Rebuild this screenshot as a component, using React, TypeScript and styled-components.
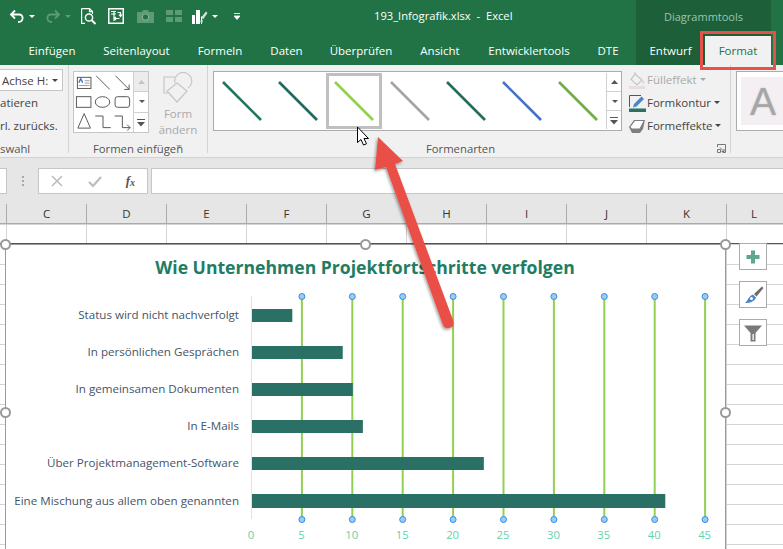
import React from 'react';
import styled, {createGlobalStyle} from 'styled-components';

const FONT = `"Open Sans", "Noto Sans", sans-serif`;

const GlobalStyle = createGlobalStyle`
html, body {
  margin: 0;
  padding: 0;
  background: #fff;
}
`;

const TABS = [
    {label: 'Einfügen', width: 75},
    {label: 'Seitenlayout', width: 94},
    {label: 'Formeln', width: 73},
    {label: 'Daten', width: 60},
    {label: 'Überprüfen', width: 89},
    {label: 'Ansicht', width: 69},
    {label: 'Entwicklertools', width: 109},
    {label: 'DTE', width: 49},
];

const COLUMNS = ['C', 'D', 'E', 'F', 'G', 'H', 'I', 'J', 'K'];

const LINE_STYLES = ['#1f7660', '#24695e', '#92d050', '#a5a5a5', '#2a6b60', '#4472c4', '#70ad47'];

const CATEGORIES = [
    {label: 'Status wird nicht nachverfolgt', value: 4, y: 309, h: 13, textY: 319},
    {label: 'In persönlichen Gesprächen', value: 9, y: 346, h: 13, textY: 356},
    {label: 'In gemeinsamen Dokumenten', value: 10, y: 383, h: 13, textY: 393},
    {label: 'In E-Mails', value: 11, y: 420, h: 13, textY: 430},
    {label: 'Über Projektmanagement-Software', value: 23, y: 457, h: 13, textY: 467},
    {label: 'Eine Mischung aus allem oben genannten', value: 41, y: 494, h: 14, textY: 505},
];

const TICKS = [5, 10, 15, 20, 25, 30, 35, 40, 45];
const SCALE = 10.08;
const HANDLES = [[5.5, 244.5], [365.5, 244.5], [725.5, 244.5], [5.5, 412.5], [725.5, 412.5]];

export default function App() {
    return (
        <Page>
            <GlobalStyle/>
            <TitleBar>
                <QuickAccess>
                    <QatSlot $gap={0}><UndoIcon/></QatSlot>
                    <SmallCaret/>
                    <QatSlot $gap={10}><RedoIcon/></QatSlot>
                    <SmallCaret $dim/>
                    <QatSlot $gap={10}><PreviewIcon/></QatSlot>
                    <QatSlot $gap={11}><PivotIcon/></QatSlot>
                    <QatSlot $gap={13}><CameraIcon/></QatSlot>
                    <QatSlot $gap={12}><GridIcon/></QatSlot>
                    <QatSlot $gap={10}><BrushIcon/></QatSlot>
                    <SmallCaret/>
                    <QatSlot $gap={16}><MoreIcon/></QatSlot>
                </QuickAccess>
                <DocTitle>193_Infografik.xlsx&nbsp; -&nbsp; Excel</DocTitle>
                <ContextTitle>Diagrammtools</ContextTitle>
            </TitleBar>
            <TabBar>
                <TabList>
                    {TABS.map(t => <Tab key={t.label} $width={t.width}>{t.label}</Tab>)}
                </TabList>
                <ContextTabs>
                    <Tab $width={69}>Entwurf</Tab>
                    <ActiveTab>Format</ActiveTab>
                </ContextTabs>
            </TabBar>
            <Ribbon>
                <LeftGroup>
                    <ElementSelect>Achse H:<Caret/></ElementSelect>
                    <ClippedRow>atieren</ClippedRow>
                    <ClippedRow>rl. zurücks.</ClippedRow>
                    <GroupLabel $right={40} $align="right">swahl</GroupLabel>
                </LeftGroup>
                <ShapesGroup>
                    <ShapesBody>
                        <ShapeGallery>
                            <ShapesDrawing/>
                            <GalleryScroll $width={14}>
                                <ScrollCell $disabled><ScrollUp/></ScrollCell>
                                <ScrollCell><Caret/></ScrollCell>
                                <ScrollCell><ScrollMore/></ScrollCell>
                            </GalleryScroll>
                        </ShapeGallery>
                        <ChangeShape>
                            <ChangeShapeIcon/>
                            <ChangeLabel>Form<br/>ändern <Caret/></ChangeLabel>
                        </ChangeShape>
                    </ShapesBody>
                    <GroupLabel>Formen einfügen</GroupLabel>
                </ShapesGroup>
                <StylesGroup>
                    <StylesBody>
                        <StyleGallery>
                            {LINE_STYLES.map((color, i) => (
                                <StyleItem key={color} $selected={i === 2}>
                                    <svg width="50" height="50" viewBox="0 0 50 50">
                                        <line x1="6" y1="6" x2="44" y2="44" stroke={color} strokeWidth="2.6"/>
                                    </svg>
                                </StyleItem>
                            ))}
                            <GalleryScroll $width={14}>
                                <ScrollCell><ScrollUp/></ScrollCell>
                                <ScrollCell><Caret/></ScrollCell>
                                <ScrollCell><ScrollMore/></ScrollCell>
                            </GalleryScroll>
                        </StyleGallery>
                        <StyleCommands>
                            <StyleCommand $disabled><FillIcon/>Fülleffekt<Caret/></StyleCommand>
                            <StyleCommand><OutlineIcon/>Formkontur<Caret/></StyleCommand>
                            <StyleCommand><EffectIcon/>Formeffekte<Caret/></StyleCommand>
                        </StyleCommands>
                    </StylesBody>
                    <GroupLabel $right={17}>Formenarten</GroupLabel>
                    <DialogLauncher width="9" height="9" viewBox="0 0 9 9">
                        <path d="M.5 3V.5H8.5V8.5H5.5M3 3.5L7 7.5M4.5 7.5H7V5M.5 5.5H3.5V8.5H.5Z" fill="none" stroke="#777"/>
                    </DialogLauncher>
                </StylesGroup>
                <WordArtGroup>
                    <WordArtBox>
                        <WordArtSwatch>A</WordArtSwatch>
                    </WordArtBox>
                </WordArtGroup>
            </Ribbon>
            <FormulaBar>
                <NameBox/>
                <BarGrip>
                    <GripDot/>
                    <GripDot/>
                    <GripDot/>
                </BarGrip>
                <FormulaButtons>
                    <svg width="14" height="14" viewBox="0 0 14 14"><path d="M2 2L12 12M12 2L2 12" stroke="#bdbdbd" strokeWidth="1.6"/></svg>
                    <svg width="16" height="14" viewBox="0 0 16 14"><path d="M2 8L6 12L14 3" fill="none" stroke="#bdbdbd" strokeWidth="2.2"/></svg>
                    <FxLabel>f<sub>x</sub></FxLabel>
                </FormulaButtons>
                <FormulaInput/>
            </FormulaBar>
            <HeaderGap/>
            <ColumnHeaders>
                <ColumnHead $width={7}/>
                {COLUMNS.map(c => <ColumnHead key={c} $width={80}>{c}</ColumnHead>)}
                <LastColumnHead>L</LastColumnHead>
            </ColumnHeaders>
            <Sheet>
                <SelectionLine/>
                <ChartObject>
                    <ChartDrawing/>
                </ChartObject>
                <ChartButtons>
                    <ChartButton>
                        <svg width="16" height="16" viewBox="0 0 16 16"><path d="M6 1.5H10V6H14.5V10H10V14.5H6V10H1.5V6H6Z" fill="#5fa88e"/></svg>
                    </ChartButton>
                    <ChartButton>
                        <svg width="24" height="24" viewBox="0 0 24 24">
                            <path d="M13 11L21 3.5L22.5 5L15.5 13.5Z" fill="#6b6b6b"/>
                            <path d="M12 11.5L15 14.5C14 18 10 20 4 20C7 18 7.5 13 12 11.5Z" fill="#4a86c8"/>
                            <circle cx="10.5" cy="15.5" r="1.5" fill="#fff"/>
                        </svg>
                    </ChartButton>
                    <ChartButton>
                        <svg width="20" height="20" viewBox="0 0 20 20">
                            <path d="M1 2.5H19L12.5 10V18.5H7.5V10Z" fill="#7a7a7a"/>
                            <path d="M9.5 11V17H10.8V11Z" fill="#fff"/>
                        </svg>
                    </ChartButton>
                </ChartButtons>
            </Sheet>
            <FormatHighlight/>
            <ArrowOverlay viewBox="0 0 783 549" width="783" height="549">
                <defs>
                    <filter id="arrowShadow" x="-30%" y="-10%" width="160%" height="120%">
                        <feDropShadow dx="-1" dy="1.5" stdDeviation="1.8" floodColor="#000" floodOpacity="0.4"/>
                    </filter>
                </defs>
                <path d="M378 137L403 161L395 164L453 320Q455 327 449 328Q445 329 443 325L386 167L375 170Z" fill="#ea4f47" filter="url(#arrowShadow)"/>
                <path d="M357.5 127V142.5L361 139.5L363.5 145L366.5 143.8L364 138.5H368.5Z" fill="#fff" stroke="#000" strokeWidth="1"/>
            </ArrowOverlay>
        </Page>
    );
}

const ChartDrawing = () => (
    <ChartSvg viewBox="5 244 721 305" width="721" height="305">
        <rect x="5" y="244" width="721" height="305" fill="#fff"/>
        <path d="M5.5 549V244.5H725.5V549" fill="none" stroke="#9a9a9a" strokeWidth="1"/>
        <text x="365" y="274" textAnchor="middle" fontFamily={FONT} fontWeight="700" fontSize="17.6" fill="#217d62">
            Wie Unternehmen Projektfortschritte verfolgen
        </text>
        <line x1="251.5" y1="296" x2="251.5" y2="519" stroke="#d5e8e4" strokeWidth="1"/>
        {TICKS.map(t => {
            const x = 251.5 + t * SCALE;
            return <line key={t} x1={x} y1="297" x2={x} y2="519" stroke="#92d050" strokeWidth="2"/>;
        })}
        {CATEGORIES.map(c => (
            <React.Fragment key={c.label}>
                <rect x="252" y={c.y} width={c.value * SCALE} height={c.h} fill="#2a7064"/>
                <text x="239" y={c.textY} textAnchor="end" fontFamily={FONT} fontSize="11.6" fill="#44546a">{c.label}</text>
            </React.Fragment>
        ))}
        {TICKS.map(t => {
            const x = 251.5 + t * SCALE;
            return (
                <React.Fragment key={t}>
                    <circle cx={x} cy="296.5" r="3" fill="#9dc9f3" stroke="#2f8fe0"/>
                    <circle cx={x} cy="519.5" r="3" fill="#9dc9f3" stroke="#2f8fe0"/>
                </React.Fragment>
            );
        })}
        {[0, ...TICKS].map(t => (
            <text key={t} x={251 + t * SCALE} y="539" textAnchor="middle" fontFamily={FONT} fontSize="11.3" fill="#5fd3ad">{t}</text>
        ))}
        {HANDLES.map(([x, y]) => (
            <circle key={`${x}-${y}`} cx={x} cy={y} r="4.5" fill="#fff" stroke="#999" strokeWidth="2"/>
        ))}
    </ChartSvg>
);

const UndoIcon = () => (
    <svg width="16" height="16" viewBox="0 0 16 16"><path d="M6 2.5L2 6.5L6 10.5M2.5 6.5H10C15 6.5 15 14 9 14" fill="none" stroke="#fff" strokeWidth="1.8"/></svg>
);

const RedoIcon = () => (
    <svg width="16" height="16" viewBox="0 0 16 16"><path d="M10 2.5L14 6.5L10 10.5M13.5 6.5H6C1 6.5 1 14 7 14" fill="none" stroke="#5c9a78" strokeWidth="1.8"/></svg>
);

const PreviewIcon = () => (
    <svg width="16" height="17" viewBox="0 0 16 17">
        <path d="M.6.6H8.5L11.5 3.6V6M8.5.6V3.6H11.5M.6.6V15.4H4" fill="none" stroke="#fff" strokeWidth="1.2"/>
        <circle cx="8" cy="9.5" r="3.6" fill="none" stroke="#fff" strokeWidth="1.5"/>
        <path d="M10.5 12L14.5 16" stroke="#fff" strokeWidth="2"/>
    </svg>
);

const PivotIcon = () => (
    <svg width="16" height="16" viewBox="0 0 16 16">
        <rect x=".75" y=".75" width="14.5" height="14.5" fill="none" stroke="#fff" strokeWidth="1.5"/>
        <path d="M3 3.5H8M3 6H8M6 3V13M9.5 4.5H12.5V8M11 6.5L12.5 8.5L14 6.5M6.5 10.5H11.5M8 9L6.5 10.5L8 12" fill="none" stroke="#fff" strokeWidth="1.2"/>
    </svg>
);

const CameraIcon = () => (
    <svg width="17" height="13" viewBox="0 0 17 13">
        <path d="M0 2H5L6 0H11L12 2H17V13H0Z" fill="#5c9a78"/>
        <circle cx="8.5" cy="7" r="3.2" fill="#217346" stroke="#8ab89f"/>
    </svg>
);

const GridIcon = () => (
    <svg width="16" height="12" viewBox="0 0 16 12">
        <path d="M0 0H7V5H0ZM9 0H16V5H9ZM0 7H7V12H0ZM9 7H16V12H9Z" fill="#5c9a78"/>
    </svg>
);

const BrushIcon = () => (
    <svg width="16" height="15" viewBox="0 0 16 15">
        <path d="M0 6H3V15H0ZM4 1H8V15H4ZM9 8L10 7V15H9Z" fill="#fff"/>
        <path d="M9.5 8L14 2.5L15.5 4L11 10.5ZM8 12L11 11L10 14.5Z" fill="#cfe3d7"/>
    </svg>
);

const MoreIcon = () => (
    <svg width="6" height="7" viewBox="0 0 6 7">
        <path d="M0 .5H6M0 3H6L3 6.5Z" fill="#fff" stroke="#fff" strokeWidth=".8"/>
    </svg>
);

const ShapesDrawing = () => (
    <svg width="61" height="60" viewBox="0 0 61 60">
        <g fill="none" stroke="#555" strokeWidth="1">
            <rect x="3.5" y="4.5" width="14" height="11.5"/>
            <path d="M11 8H16M11 10.5H16M5 13H16" stroke="#999"/>
            <path d="M5 10L7 6L9 10" stroke="#4472c4" strokeWidth="1.4"/>
            <path d="M23 3L37 17"/>
            <path d="M43 3L57 17M52 17H57V12"/>
            <rect x="2.5" y="24.5" width="15" height="11"/>
            <ellipse cx="29.5" cy="30" rx="7.5" ry="5.5"/>
            <rect x="42.5" y="24.5" width="15" height="11" rx="2.5"/>
            <path d="M4 57L10.5 42L17 57Z"/>
            <path d="M22 44.5H30V56.5H38"/>
            <path d="M42 44.5H50V56.5H58M55 53.5L58 56.5L55 59.5"/>
        </g>
    </svg>
);

const ChangeShapeIcon = () => (
    <svg width="31" height="31" viewBox="0 0 31 31">
        <g fill="none" stroke="#c6c6c6" strokeWidth="1.2">
            <path d="M12 5H1V21H5"/>
            <path d="M12 11A8.5 8.5 0 1 1 25 16"/>
            <path d="M14 11L24 19L14 30L4 19Z"/>
        </g>
    </svg>
);

const ScrollUp = () => (
    <svg width="7" height="4" viewBox="0 0 7 4"><path d="M0 4L3.5 0L7 4Z" fill="currentColor"/></svg>
);

const ScrollMore = () => (
    <svg width="8" height="9" viewBox="0 0 8 9"><path d="M0 1H8V2H0ZM0 4H8L4 8.5Z" fill="currentColor"/></svg>
);

const FillIcon = () => (
    <svg width="18" height="18" viewBox="0 0 18 18">
        <path d="M7 1V4M7 3L14 9L9 14L3 8.5Z" fill="none" stroke="#c4c4c4" strokeWidth="1.2"/>
        <path d="M15 9C16.5 11 17 12 15.5 13C14 12 14 11 15 9Z" fill="#d5d5d5"/>
        <rect x="1" y="15" width="16" height="3" fill="#e6dede"/>
    </svg>
);

const OutlineIcon = () => (
    <svg width="18" height="18" viewBox="0 0 18 18">
        <path d="M1.5 13V1.5H13" fill="none" stroke="#555"/>
        <path d="M6 10L13.5 2.5L16 5L8.5 12.5L5 13.5Z" fill="#4a86c8"/>
        <rect x="1" y="14.5" width="17" height="3.5" fill="#2a7064"/>
    </svg>
);

const EffectIcon = () => (
    <svg width="18" height="16" viewBox="0 0 18 16">
        <path d="M1 9L6 2H17L15 11L12 15H4Z" fill="#7f7f7f"/>
        <path d="M2.5 9L7 3H15.5L11.5 10.5H4Z" fill="#fff"/>
    </svg>
);

const Page = styled.div`
position: relative;
width: 783px;
height: 549px;
overflow: hidden;
background: #fff;
font-family: ${FONT};
`;

const TitleBar = styled.header`
display: flex;
align-items: center;
height: 33px;
background: #217346;
color: #fff;
position: relative;
`;

const QuickAccess = styled.div`
display: flex;
align-items: center;
padding-left: 9px;
padding-bottom: 1px;
`;

type QatSlotProps = {
    $gap: number;
}

const QatSlot = styled.span<QatSlotProps>`
display: flex;
margin-left: ${props => props.$gap}px;
`;

type CaretProps = {
    $dim?: boolean;
}

const SmallCaret = styled.span<CaretProps>`
width: 0;
height: 0;
margin-left: 4px;
border-left: 3px solid transparent;
border-right: 3px solid transparent;
border-top: 3px solid ${props => props.$dim ? '#5c9a78' : '#fff'};
`;

const DocTitle = styled.div`
position: absolute;
left: 374px;
top: 8px;
font-size: 11.2px;
line-height: 16px;
white-space: nowrap;
`;

const ContextTitle = styled.div`
margin-left: auto;
margin-right: 12px;
width: 135px;
height: 100%;
background: #1c5f38;
color: #9fc3ae;
font-size: 11px;
display: flex;
align-items: center;
justify-content: center;
`;

const TabBar = styled.nav`
display: flex;
justify-content: space-between;
height: 32px;
background: #217346;
padding-right: 12px;
padding-left: 14.5px;
`;

const TabList = styled.div`
display: flex;
`;

const ContextTabs = styled.div`
display: flex;
width: 135px;
background: #1c5f38;
`;

type TabProps = {
    $width: number;
}

const Tab = styled.div<TabProps>`
width: ${props => props.$width}px;
color: #fff;
font-size: 11.5px;
display: flex;
align-items: center;
justify-content: center;
white-space: nowrap;
padding-top: 2px;
`;

const ActiveTab = styled.div`
flex: 1;
margin-top: 3px;
background: #f1f1f1;
color: #217346;
font-size: 11.5px;
display: flex;
align-items: center;
justify-content: center;
`;

const Ribbon = styled.section`
display: flex;
height: 93px;
background: #f1f1f1;
border-bottom: 1px solid #d2d2d2;
box-sizing: border-box;
color: #444;
font-size: 11.5px;
`;

const GroupBase = styled.div`
position: relative;
display: flex;
flex-direction: column;
box-sizing: border-box;
height: 88px;
border-right: 1px solid #d4d4d4;
`;

const LeftGroup = styled(GroupBase)`
width: 69px;
padding: 4px 0 0 0;
`;

const ShapesGroup = styled(GroupBase)`
width: 139px;
padding: 6px 0 0 4px;
`;

const StylesGroup = styled(GroupBase)`
width: 523px;
padding: 6px 0 0 5px;
`;

const WordArtGroup = styled.div`
flex: 1;
padding: 6px 0 0 5px;
`;

const ElementSelect = styled.div`
box-sizing: border-box;
width: 63px;
height: 22px;
background: #fff;
border: 1px solid #c6c6c6;
border-left: 0;
display: flex;
align-items: center;
justify-content: space-between;
padding: 0 4px 0 2px;
color: #444;
flex: none;
white-space: nowrap;
`;

const ClippedRow = styled.div`
height: 23px;
line-height: 23px;
white-space: nowrap;
`;

type GroupLabelProps = {
    $align?: string;
    $right?: number;
}

const GroupLabel = styled.div<GroupLabelProps>`
position: absolute;
bottom: -4px;
left: 0;
right: ${props => props.$right || 0}px;
text-align: ${props => props.$align || 'center'};
font-size: 11.3px;
line-height: 16px;
color: #555;
`;

const ShapesBody = styled.div`
display: flex;
gap: 6px;
`;

const ShapeGallery = styled.div`
display: flex;
width: 76px;
height: 62px;
background: #fff;
border: 1px solid #c6c6c6;
box-sizing: border-box;
`;

type GalleryScrollProps = {
    $width: number;
}

const GalleryScroll = styled.div<GalleryScrollProps>`
width: ${props => props.$width}px;
flex: none;
margin-left: auto;
display: flex;
flex-direction: column;
border-left: 1px solid #d0d0d0;
color: #555;
`;

type ScrollCellProps = {
    $disabled?: boolean;
}

const ScrollCell = styled.div<ScrollCellProps>`
flex: 1;
display: flex;
align-items: center;
justify-content: center;
background: ${props => props.$disabled ? '#ececec' : '#fff'};
color: ${props => props.$disabled ? '#c4c4c4' : '#555'};
& + & {
border-top: 1px solid #d0d0d0;
}
`;

const ChangeShape = styled.div`
width: 46px;
display: flex;
flex-direction: column;
align-items: center;
color: #a9a9a9;
padding-top: 1px;
text-align: center;
`;

const ChangeLabel = styled.div`
line-height: 16px;
margin-top: 3px;
`;

const Caret = styled.i`
display: inline-block;
width: 0;
height: 0;
border-left: 3px solid transparent;
border-right: 3px solid transparent;
border-top: 3px solid currentColor;
margin-left: 2px;
vertical-align: middle;
`;

const StylesBody = styled.div`
display: flex;
gap: 6px;
`;

const StyleGallery = styled.div`
display: flex;
width: 409px;
height: 60px;
background: #fff;
border: 1px solid #acacac;
box-sizing: border-box;
padding: 1px 0;
`;

type StyleItemProps = {
    $selected: boolean;
}

const StyleItem = styled.div<StyleItemProps>`
width: 56px;
flex: none;
box-sizing: border-box;
display: flex;
align-items: center;
justify-content: center;
border: ${props => props.$selected ? '3px solid #c0c0c0' : '0'};
`;

const StyleCommands = styled.div`
display: flex;
flex-direction: column;
gap: 2px;
margin-top: -2px;
`;

type StyleCommandProps = {
    $disabled?: boolean;
}

const StyleCommand = styled.div<StyleCommandProps>`
display: flex;
align-items: center;
gap: 1px;
height: 21px;
white-space: nowrap;
color: ${props => props.$disabled ? '#a9a9a9' : '#444'};
`;

const DialogLauncher = styled.svg`
position: absolute;
right: 4px;
bottom: 0;
`;

const WordArtBox = styled.div`
height: 60px;
background: #fff;
border: 1px solid #acacac;
border-right: 0;
box-sizing: border-box;
padding: 5px 0 5px 4px;
`;

const WordArtSwatch = styled.div`
height: 48px;
background: #f3eff3;
color: #a6a6a6;
font-family: "Liberation Sans", sans-serif;
font-size: 39px;
line-height: 49px;
padding-left: 9px;
text-shadow: 0 0 2px #c4c4c4;
`;

const FormulaBar = styled.div`
display: flex;
align-items: stretch;
height: 26px;
padding-top: 10px;
background: #e6e6e6;
`;

const NameBox = styled.div`
width: 7px;
background: #fff;
border: 1px solid #c6c6c6;
border-left: 0;
box-sizing: border-box;
`;

const BarGrip = styled.div`
width: 31px;
display: flex;
flex-direction: column;
align-items: flex-start;
justify-content: center;
gap: 2px;
padding-left: 15px;
box-sizing: border-box;
`;

const GripDot = styled.span`
width: 2px;
height: 2px;
background: #a8a8a8;
`;

const FormulaButtons = styled.div`
display: flex;
align-items: center;
justify-content: space-between;
box-sizing: border-box;
width: 110px;
padding: 0 12px 0 11px;
background: #fff;
border: 1px solid #c6c6c6;
`;

const FxLabel = styled.span`
font-family: "Liberation Serif", serif;
font-style: italic;
font-weight: 700;
font-size: 13px;
color: #555;
& sub {
font-size: 10px;
vertical-align: -1px;
}
`;

const FormulaInput = styled.div`
flex: 1;
margin-left: 3px;
background: #fff;
border: 1px solid #c6c6c6;
border-right: 0;
`;

const HeaderGap = styled.div`
height: 10px;
background: #e6e6e6;
`;

const ColumnHeaders = styled.div`
display: flex;
height: 20px;
background: #e6e6e6;
border-bottom: 1px solid #ababab;
box-sizing: border-box;
`;

type ColumnHeadProps = {
    $width: number;
}

const ColumnHead = styled.div<ColumnHeadProps>`
width: ${props => props.$width}px;
flex: none;
box-sizing: border-box;
border-right: 1px solid #ababab;
font-size: 11.5px;
line-height: 19px;
text-align: center;
color: #333;
`;

const LastColumnHead = styled.div`
flex: 1;
font-size: 11.5px;
line-height: 19px;
text-align: center;
color: #333;
padding-right: 2px;
`;

const Sheet = styled.main`
position: relative;
height: 325px;
background-color: #fff;
background-image:
  linear-gradient(to bottom, transparent 19px, #d4d4d4 19px),
  linear-gradient(to right, transparent 79px, #d4d4d4 79px);
background-size: 80px 20px, 80px 20px;
background-position: 0 1px, 7px 0;
`;

const SelectionLine = styled.div`
position: absolute;
left: 0;
right: 0;
top: 19px;
height: 1px;
background: #217346;
`;

const ChartObject = styled.div`
position: absolute;
left: 5px;
top: 20px;
`;

const ChartSvg = styled.svg`
display: block;
overflow: visible;
`;

const ChartButtons = styled.div`
position: absolute;
left: 739px;
top: 19px;
display: flex;
flex-direction: column;
gap: 11px;
`;

const ChartButton = styled.div`
width: 28px;
height: 27px;
box-sizing: border-box;
background: #fff;
border: 1px solid #ababab;
display: flex;
align-items: center;
justify-content: center;
`;

const FormatHighlight = styled.div`
position: absolute;
left: 700px;
top: 31px;
width: 76px;
height: 39px;
box-sizing: border-box;
border: 3px solid #e8504a;
`;

const ArrowOverlay = styled.svg`
position: absolute;
left: 0;
top: 0;
pointer-events: none;
`;
